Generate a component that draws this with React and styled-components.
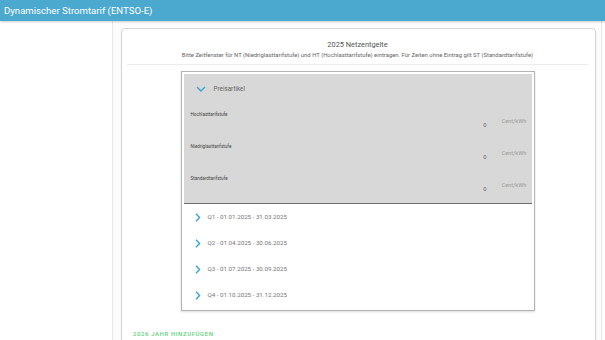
import React from "react";
import styled, { createGlobalStyle } from "styled-components";

const GlobalStyle = createGlobalStyle`
  html, body {
    margin: 0;
    padding: 0;
    background: #fff;
    font-family: Roboto, "Liberation Sans", Arial, sans-serif;
  }
`;

const accent = "#3ea3d2";

const TopBar = styled.header`
  height: 21px;
  line-height: 21px;
  padding-left: 4px;
  background: #4ba9d0;
  color: #fff;
  font-size: 9.6px;
  box-shadow: 0 1px 2px rgba(0, 0, 0, 0.2);
  position: relative;
  z-index: 1;
`;

const Layout = styled.div`
  display: flex;
  height: 319px;
  overflow: hidden;
`;

const Sidebar = styled.aside`
  width: 112px;
  border-right: 1px solid #e6e6e6;
`;

const Main = styled.main`
  flex: 1;
  display: flex;
  padding-right: 3px;
  background: #fcfcfc;
`;

const Content = styled.div`
  flex: 1;
  padding: 7px 5px 0 8px;
  border-right: 1px solid #e6e6e6;
`;

const Card = styled.section`
  background: #fff;
  border: 1px solid #d6d6d6;
  border-radius: 4px;
  box-shadow: 0 1px 2px rgba(0, 0, 0, 0.08);
  padding: 11px 7px 0 5px;
  min-height: 400px;
`;

const Title = styled.h2`
  margin: 0;
  text-align: center;
  font-size: 7.4px;
  line-height: 10px;
  font-weight: 400;
  color: #555;
`;

const Subtitle = styled.p`
  margin: 1px 0 0;
  text-align: center;
  font-size: 5.9px;
  line-height: 8px;
  color: #666;
  padding-bottom: 5px;
  border-bottom: 1px solid #ececec;
`;

const Accordion = styled.div`
  width: 348px;
  margin: 6px auto 0;
  border: 1px solid #b3b3b3;
  padding: 2px;
  box-shadow: 0 1px 2px rgba(0, 0, 0, 0.15);
`;

const Panel = styled.div`
  background: #d8d8d8;
  padding: 0 3px 4px 7px;
  border-bottom: 1px solid #6f6f6f;
`;

const PanelHead = styled.div`
  display: flex;
  align-items: center;
  height: 29px;
  padding-left: 5px;
  gap: 8px;
  font-size: 6.3px;
  color: #666;
`;

const PriceRow = styled.div`
  display: flex;
  align-items: flex-start;
  height: 32px;
`;

const PriceLabel = styled.div`
  flex: 1;
  padding-top: 9px;
  font-size: 4.6px;
  line-height: 5px;
  color: #444;
`;

const PriceValue = styled.div`
  padding-top: 19px;
  font-size: 5.8px;
  line-height: 6px;
  color: #666;
`;

const PriceUnit = styled.div`
  width: 27px;
  margin-left: 15px;
  padding-top: 15px;
  font-size: 5.6px;
  line-height: 6px;
  color: #9a9a9a;
`;

const Quarter = styled.div`
  display: flex;
  align-items: center;
  height: 26px;
  padding-left: 11px;
  gap: 7px;
  font-size: 6.2px;
  color: #777;
`;

const AddYear = styled.button`
  display: block;
  margin: 19px 0 0 6px;
  padding: 0;
  border: none;
  background: none;
  font-family: inherit;
  font-size: 6px;
  font-weight: 500;
  letter-spacing: 0.6px;
  color: #5ccf7c;
  text-transform: uppercase;
`;

function ChevronDown() {
  return (
    <svg width="10" height="6" viewBox="0 0 10 6">
      <path d="M1 1 L5 5 L9 1" fill="none" stroke={accent} strokeWidth="1.4" />
    </svg>
  );
}

function ChevronRight() {
  return (
    <svg width="6" height="9" viewBox="0 0 6 9">
      <path d="M1 0.8 L4.6 4.5 L1 8.2" fill="none" stroke={accent} strokeWidth="1.4" />
    </svg>
  );
}

const prices = ["Hochlasttarifstufe", "Niedriglasttarifstufe", "Standardtarifstufe"];
const quarters = [
  "Q1 - 01.01.2025 - 31.03.2025",
  "Q2 - 01.04.2025 - 30.06.2025",
  "Q3 - 01.07.2025 - 30.09.2025",
  "Q4 - 01.10.2025 - 31.12.2025",
];

function App() {
  return (
    <>
      <GlobalStyle />
      <TopBar>Dynamischer Stromtarif (ENTSO-E)</TopBar>
      <Layout>
        <Sidebar />
        <Main>
          <Content>
            <Card>
              <Title>2025 Netzentgelte</Title>
              <Subtitle>
                Bitte Zeitfenster für NT (Niedriglasttarifstufe) und HT (Hochlasttarifstufe) eintragen. Für Zeiten ohne Eintrag gilt ST (Standardtarifstufe)
              </Subtitle>
              <Accordion>
                <Panel>
                  <PanelHead>
                    <ChevronDown />
                    Preisartikel
                  </PanelHead>
                  {prices.map((p) => (
                    <PriceRow key={p}>
                      <PriceLabel>{p}</PriceLabel>
                      <PriceValue>0</PriceValue>
                      <PriceUnit>Cent/kWh</PriceUnit>
                    </PriceRow>
                  ))}
                </Panel>
                {quarters.map((q) => (
                  <Quarter key={q}>
                    <ChevronRight />
                    {q}
                  </Quarter>
                ))}
              </Accordion>
              <AddYear>2026 Jahr hinzufügen</AddYear>
            </Card>
          </Content>
        </Main>
      </Layout>
    </>
  );
}

export default App;
